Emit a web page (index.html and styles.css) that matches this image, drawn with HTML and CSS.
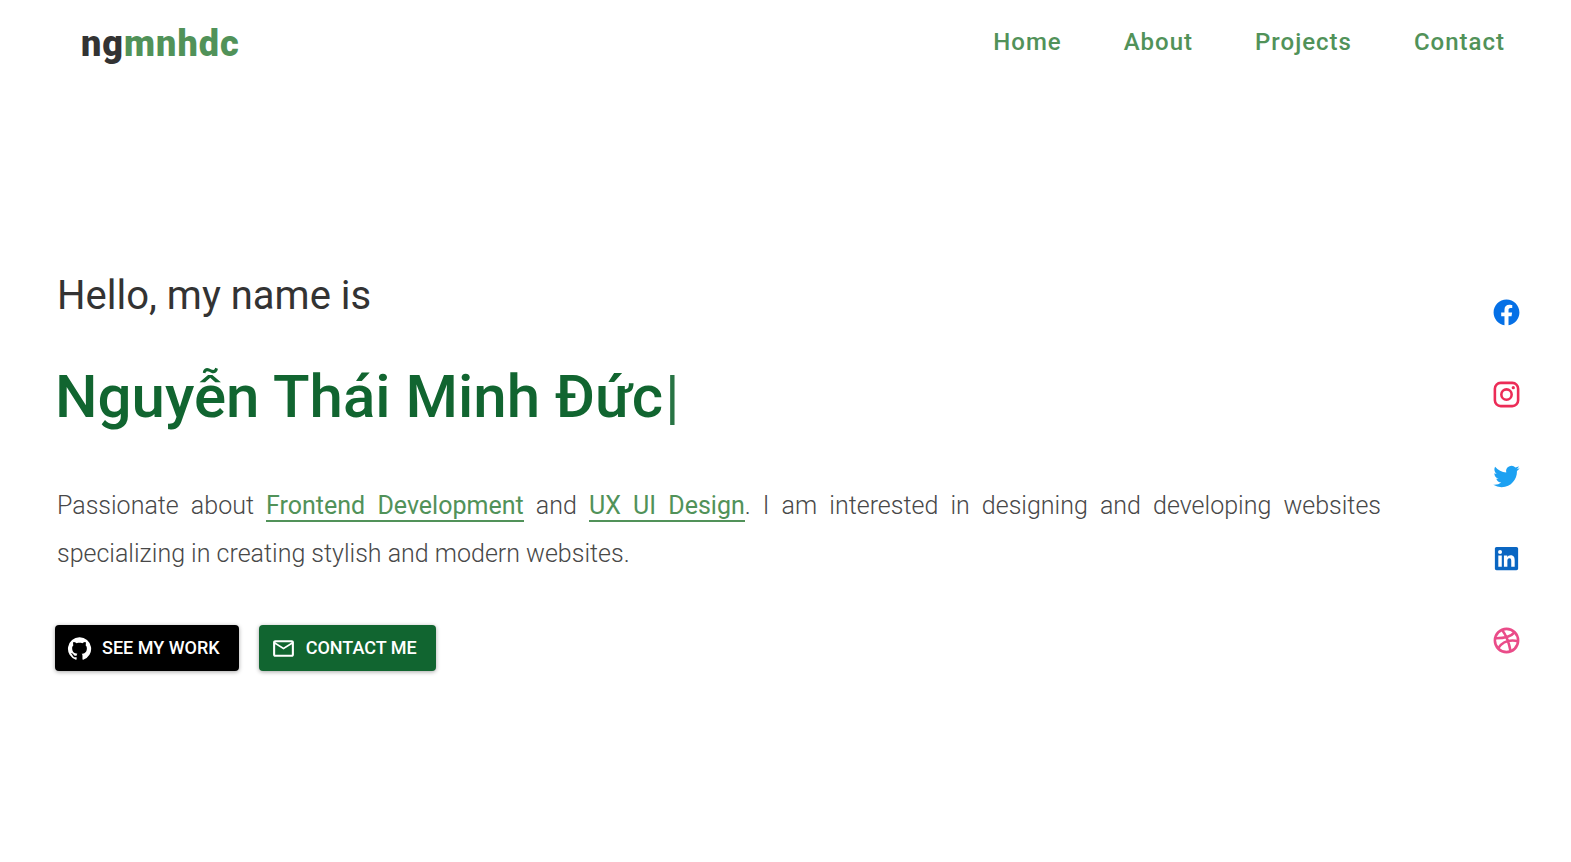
FILE: index.html
```html
<!DOCTYPE html>
<html lang="en">
<head>
<meta charset="utf-8">
<meta name="viewport" content="width=device-width, initial-scale=1">
<title>ngmnhdc</title>
<link rel="stylesheet" href="styles.css">
</head>
<body>
<header class="header">
  <a class="logo" href="#home">ng<span class="logo-accent">mnhdc</span></a>
  <nav class="nav">
    <a href="#home">Home</a>
    <a href="#about">About</a>
    <a href="#projects">Projects</a>
    <a href="#contact">Contact</a>
  </nav>
</header>
<main class="hero" id="home">
  <section class="intro">
    <p class="greeting">Hello, my name is</p>
    <h1 class="name">Nguyễn Thái Minh Đức<span class="cursor">|</span></h1>
    <p class="bio">Passionate about <span class="mark">Frontend Development</span> and <span class="mark">UX UI Design</span>. I am interested in designing and developing websites specializing in creating stylish and modern websites.</p>
    <div class="actions">
      <button class="button button-dark" type="button">
        <svg class="button-icon" viewBox="0 0 24 24" fill="currentColor" aria-hidden="true"><path d="M12 1.27a11 11 0 00-3.48 21.46c.55.09.73-.28.73-.55v-1.84c-3.03.64-3.67-1.46-3.67-1.46-.55-1.29-1.28-1.65-1.28-1.65-.92-.65.1-.65.1-.65 1.1 0 1.73 1.1 1.73 1.1.92 1.65 2.57 1.2 3.21.92a2 2 0 01.64-1.47c-2.47-.27-5.04-1.19-5.04-5.5 0-1.1.46-2.1 1.2-2.84a3.76 3.76 0 010-2.93s.91-.28 3.11 1.1c1.8-.49 3.7-.49 5.5 0 2.1-1.38 3.02-1.1 3.02-1.1a3.76 3.76 0 01.1 2.93c.83.74 1.2 1.74 1.2 2.94 0 4.21-2.57 5.13-5.04 5.4.45.37.82.92.82 2.02v3.03c0 .27.1.64.73.55A11 11 0 0012 1.27"/></svg>
        SEE MY WORK
      </button>
      <button class="button button-green" type="button">
        <svg class="button-icon" viewBox="0 0 24 24" fill="currentColor" aria-hidden="true"><path d="M22 6c0-1.1-.9-2-2-2H4c-1.1 0-2 .9-2 2v12c0 1.1.9 2 2 2h16c1.1 0 2-.9 2-2V6zm-2 0l-8 5-8-5h16zm0 12H4V8l8 5 8-5v10z"/></svg>
        CONTACT ME
      </button>
    </div>
  </section>
  <aside class="social">
    <a class="facebook" href="#facebook" aria-label="Facebook"><svg viewBox="0 0 24 24" fill="currentColor"><path d="M12 2C6.477 2 2 6.477 2 12c0 4.991 3.657 9.128 8.438 9.879V14.890h-2.540V12h2.540V9.797c0-2.506 1.492-3.890 3.777-3.890 1.094 0 2.238.195 2.238.195v2.460h-1.260c-1.243 0-1.630.771-1.630 1.562V12h2.773l-.443 2.890h-2.330v6.989C18.343 21.129 22 16.990 22 12c0-5.523-4.477-10-10-10z"/></svg></a>
    <a class="instagram" href="#instagram" aria-label="Instagram"><svg viewBox="0 0 24 24" fill="none" stroke="currentColor" stroke-width="2"><rect x="3" y="3" width="18" height="18" rx="4.500"/><circle cx="12" cy="12" r="4"/><circle cx="17.250" cy="6.750" r="1.250" fill="currentColor" stroke="none"/></svg></a>
    <a class="twitter" href="#twitter" aria-label="Twitter"><svg viewBox="0 0 24 24" fill="currentColor"><path d="M22.162 5.656a8.384 8.384 0 0 1-2.402.658A4.196 4.196 0 0 0 21.600 4c-.82.488-1.719.83-2.656 1.015a4.182 4.182 0 0 0-7.126 3.814 11.874 11.874 0 0 1-8.620-4.370 4.168 4.168 0 0 0-.566 2.103c0 1.450.738 2.731 1.860 3.481a4.168 4.168 0 0 1-1.894-.523v.052a4.185 4.185 0 0 0 3.355 4.101 4.210 4.210 0 0 1-1.890.072A4.185 4.185 0 0 0 7.970 16.650a8.394 8.394 0 0 1-6.191 1.732 11.830 11.830 0 0 0 6.410 1.880c7.693 0 11.900-6.373 11.900-11.900 0-.18-.005-.362-.013-.54a8.496 8.496 0 0 0 2.087-2.165z"/></svg></a>
    <a class="linkedin" href="#linkedin" aria-label="LinkedIn"><svg viewBox="0 0 24 24" fill="currentColor"><path d="M18.335 18.339H15.670v-4.177c0-.996-.02-2.278-1.390-2.278-1.389 0-1.601 1.084-1.601 2.205v4.250h-2.666V9.750h2.560v1.170h.035c.358-.674 1.228-1.387 2.528-1.387 2.700 0 3.200 1.778 3.200 4.091v4.715zM7.003 8.575a1.546 1.546 0 0 1-1.548-1.549 1.548 1.548 0 1 1 1.547 1.549zm1.336 9.764H5.666V9.750H8.340v8.589zM19.670 3H4.329C3.593 3 3 3.580 3 4.297v15.406C3 20.420 3.594 21 4.328 21h15.338C20.400 21 21 20.420 21 19.703V4.297C21 3.580 20.400 3 19.666 3h.003z"/></svg></a>
    <a class="dribbble" href="#dribbble" aria-label="Dribbble"><svg viewBox="0 0 24 24" fill="none" stroke="currentColor" stroke-width="2"><circle cx="12" cy="12" r="9"/><path d="M8.500 3.700c3 3.900 5.300 9.200 6.700 16.800M3 10.200c6.300.1 12.100-.6 15.400-4.700M5.400 18.200c3.200-5.200 8.300-7.300 15.700-5.700"/></svg></a>
  </aside>
</main>
</body>
</html>
```
FILE: styles.css
```css
* {
  box-sizing: border-box;
}

body {
  margin: 0;
  min-height: 100vh;
  display: flex;
  flex-direction: column;
  font-family: Roboto, "Liberation Sans", sans-serif;
  color: #333;
  background: #fff;
}

a {
  color: inherit;
  text-decoration: none;
}

.header {
  display: flex;
  justify-content: space-between;
  align-items: center;
  height: 84px;
  margin-bottom: 6px;
  padding: 0 66px 0 81px;
}

.logo {
  font-size: 36px;
  line-height: 48px;
  font-weight: 900;
  letter-spacing: 1px;
  padding-top: 4px;
}

.logo-accent {
  color: #519259;
}

.nav {
  display: flex;
  gap: 62px;
  font-size: 24px;
  font-weight: 500;
  line-height: 28px;
  letter-spacing: 1px;
  color: #519259;
}

.hero {
  flex: 1;
  display: flex;
  justify-content: space-between;
  align-items: center;
  padding: 0 49px 0 55px;
}

.intro {
  flex: 1;
  max-width: 1326px;
  padding-bottom: 9px;
}

.greeting {
  margin: 0;
  padding-left: 2px;
  font-size: 40px;
  line-height: 48px;
}

.name {
  margin: 37px 0 45px;
  font-size: 60px;
  line-height: 80px;
  font-weight: 500;
  color: #116530;
}

.cursor {
  padding-left: 2px;
  font-weight: 400;
  opacity: 0.9;
}

.bio {
  margin: 0;
  padding: 0 0 0 2px;
  font-size: 25px;
  line-height: 48px;
  font-weight: 300;
  color: #484848;
  text-align: justify;
}

.mark {
  font-weight: 400;
  color: #519259;
  border-bottom: 2px solid #519259;
}

.actions {
  display: flex;
  gap: 20px;
  margin-top: 47px;
}

.button {
  display: flex;
  align-items: center;
  gap: 10px;
  height: 46px;
  padding: 0 19px 0 12px;
  border: 0;
  border-radius: 4px;
  font: 500 18px/24px Roboto, "Liberation Sans", sans-serif;
  color: #fff;
  box-shadow: 0 1px 4px rgba(0, 0, 0, 0.35);
}

.button-dark {
  background: #000;
}

.button-green {
  background: #116530;
}

.button-icon {
  width: 25px;
  height: 25px;
}

.social {
  display: flex;
  flex-direction: column;
  gap: 51px;
}

.social a,
.social svg {
  display: block;
  width: 31px;
  height: 31px;
}

.facebook {
  color: #0570e6;
}

.instagram {
  color: #ec2c57;
}

.twitter {
  color: #1da1f2;
}

.linkedin {
  color: #0a66c2;
}

.dribbble {
  color: #ea4c89;
}
```
